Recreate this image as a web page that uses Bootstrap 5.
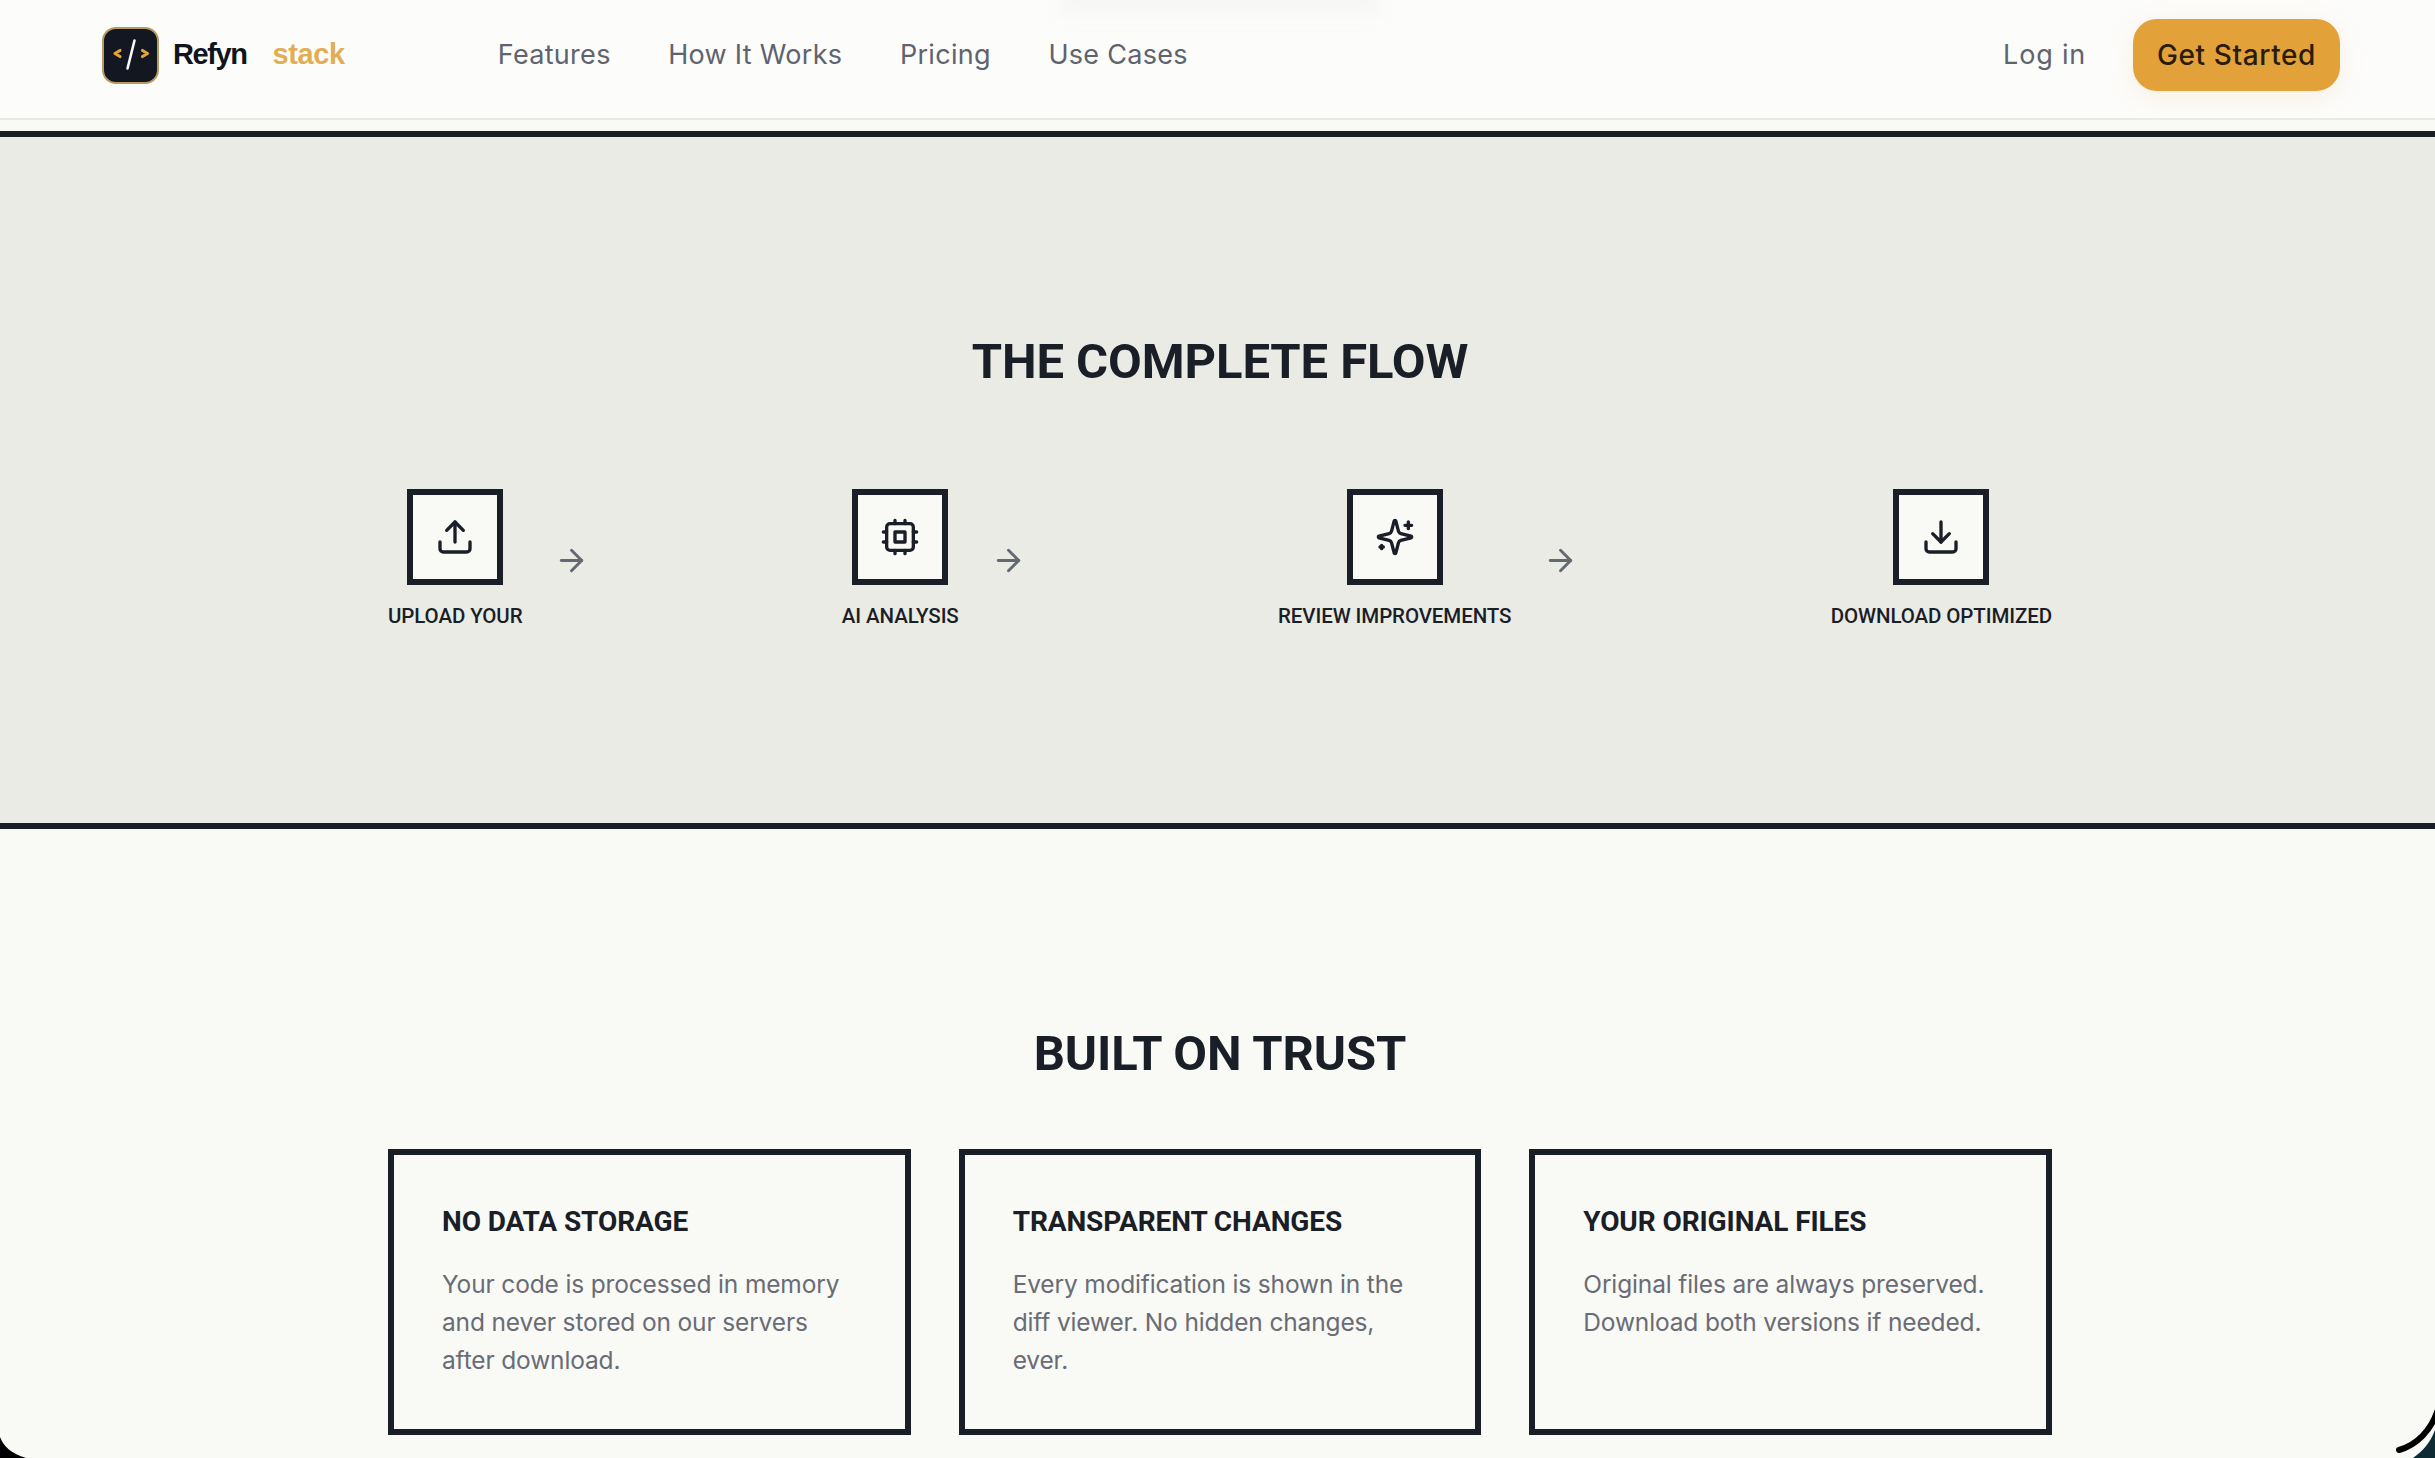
<!DOCTYPE html>
<html lang="en">

<head>
    <meta charset="UTF-8" />
    <meta name="viewport" content="width=device-width, initial-scale=1.0">
    <title>Refyn stack</title>
    <link href="https://cdn.jsdelivr.net/npm/bootstrap@5.3.0/dist/css/bootstrap.min.css" rel="stylesheet">
    <style>
        html, body { height: 100%; overflow: hidden; }
        body { background: #f9f9f6; color: #1a1e26; font-family: "Inter", "Liberation Sans", sans-serif; }
        .top-nav { height: 120px; padding: 0 95px 8px 102px; background: #fcfcfb; border-bottom: 2px solid #e9e9e6; position: relative; overflow: hidden; }
        .top-glow { position: absolute; top: -16px; left: 1060px; width: 320px; height: 30px; background: #f6f6f5; filter: blur(8px); }
        .logo-box { width: 57px; height: 57px; border-radius: 14px; background: #121722; border: 2px solid #b79a5e; position: relative; }
        .brand-a, .brand-b { font-family: "Liberation Sans", sans-serif; font-weight: 700; font-size: 29px; position: relative; }
        .brand-a { color: #10141c; margin-left: 14px; letter-spacing: -1.4px; }
        .brand-b { color: #e2ae55; margin-left: 26px; letter-spacing: -.4px; }
        .nav-links { margin-left: 153px; gap: 57.5px; position: relative; }
        .nav-links a, .login-link { color: #5f636d; font-size: 27px; font-weight: 400; text-decoration: none; letter-spacing: .3px; }
        .login-link { margin-right: 47px; letter-spacing: .8px; position: relative; }
        .start-btn { width: 207px; height: 72px; border: 0; border-radius: 24px; background: #e3a13a; color: #2a1c08; font-size: 28px; font-weight: 500; letter-spacing: .6px; padding: 0; box-shadow: 0 6px 24px rgba(227, 161, 58, .14); position: relative; }
        .flow-band { margin-top: 11px; height: 698px; background: #ebebe6; border-top: 6px solid #1a1e26; border-bottom: 6px solid #1a1e26; padding-top: 200px; }
        .wrap-main { width: 1664px; margin-left: 388px; }
        .sec-title { font-family: "Roboto", sans-serif; font-size: 49px; font-weight: 700; line-height: 1; text-align: center; letter-spacing: -.1px; margin: 0; }
        .flow-row { margin-top: 103px; }
        .flow-step { width: 96px; height: 96px; border: 6px solid #1a1e26; background: #f9f9f6; }
        .flow-step svg { width: 40px; height: 40px; fill: none; stroke: currentColor; stroke-width: 2; stroke-linecap: round; stroke-linejoin: round; }
        .arrow-next { width: 35px; height: 35px; margin-left: 32px; fill: none; stroke: #646871; stroke-width: 2; stroke-linecap: round; stroke-linejoin: round; }
        .flow-label { font-family: "Roboto", sans-serif; font-size: 20.5px; font-weight: 500; line-height: 28px; margin: 17px 0 2px; white-space: nowrap; letter-spacing: -.1px; }
        .trust-sec { padding-top: 200px; }
        .trust-grid { display: grid; grid-template-columns: repeat(3, 1fr); gap: 48px; margin-top: 71px; }
        .trust-box { height: 286px; border: 6px solid #1a1e26; padding: 50px 48px 48px; }
        .trust-box h3 { font-family: "Roboto", sans-serif; font-size: 28px; font-weight: 700; line-height: 1.2; margin: 0 0 26px; letter-spacing: -.1px; }
        .trust-box p { font-size: 24.5px; line-height: 38px; color: #696c75; margin: 0; letter-spacing: -.15px; }
        .corner-l, .corner-r { position: fixed; bottom: 0; width: 60px; height: 60px; pointer-events: none; }
        .corner-l { left: 0; }
        .corner-r { right: 0; }
    </style>
</head>

<body>
    <nav class="top-nav d-flex align-items-center">
        <div class="top-glow"></div>
        <div class="logo-box d-flex align-items-center justify-content-center">
            <svg width="44" height="36" viewBox="0 0 44 36" fill="none" stroke-linecap="round" stroke-linejoin="round">
                <path d="M11 13.5l-5 3 5 3M33.5 13.5l5 3-5 3" stroke="#e3a13a" stroke-width="3.2" />
                <path d="M25.5 3.5l-7 28" stroke="#f9f9f6" stroke-width="2.6" />
            </svg>
        </div>
        <span class="brand-a">Refyn</span>
        <span class="brand-b">stack</span>
        <div class="nav-links d-flex">
            <a href="#">Features</a>
            <a href="#">How It Works</a>
            <a href="#">Pricing</a>
            <a href="#">Use Cases</a>
        </div>
        <a href="#" class="login-link ms-auto">Log in</a>
        <button type="button" class="start-btn">Get Started</button>
    </nav>

    <section class="flow-band">
        <div class="wrap-main">
            <h2 class="sec-title">THE COMPLETE FLOW</h2>
            <div class="flow-row d-flex justify-content-between align-items-center">
                <div class="d-flex align-items-center">
                    <div class="d-flex flex-column align-items-center">
                        <div class="flow-step d-flex align-items-center justify-content-center">
                            <svg viewBox="0 0 24 24"><path d="M21 15v4a2 2 0 0 1-2 2H5a2 2 0 0 1-2-2v-4" /><path d="M17 8l-5-5-5 5" /><path d="M12 3v12" /></svg>
                        </div>
                        <div class="flow-label">UPLOAD YOUR</div>
                    </div>
                    <svg class="arrow-next" viewBox="0 0 24 24"><path d="M5 12h14" /><path d="M12 5l7 7-7 7" /></svg>
                </div>
                <div class="d-flex align-items-center">
                    <div class="d-flex flex-column align-items-center">
                        <div class="flow-step d-flex align-items-center justify-content-center">
                            <svg viewBox="0 0 24 24"><rect x="4" y="4" width="16" height="16" rx="2" /><rect x="9" y="9" width="6" height="6" /><path d="M15 2v2M15 20v2M2 15h2M2 9h2M20 15h2M20 9h2M9 2v2M9 20v2" /></svg>
                        </div>
                        <div class="flow-label">AI ANALYSIS</div>
                    </div>
                    <svg class="arrow-next" viewBox="0 0 24 24"><path d="M5 12h14" /><path d="M12 5l7 7-7 7" /></svg>
                </div>
                <div class="d-flex align-items-center">
                    <div class="d-flex flex-column align-items-center">
                        <div class="flow-step d-flex align-items-center justify-content-center">
                            <svg viewBox="0 0 24 24"><path d="M9.937 15.5A2 2 0 0 0 8.5 14.063l-6.135-1.582a.5.5 0 0 1 0-.962L8.5 9.936A2 2 0 0 0 9.937 8.5l1.582-6.135a.5.5 0 0 1 .963 0L14.063 8.5A2 2 0 0 0 15.5 9.937l6.135 1.581a.5.5 0 0 1 0 .964L15.5 14.063a2 2 0 0 0-1.437 1.437l-1.582 6.135a.5.5 0 0 1-.963 0z" /><path d="M20 3v4M22 5h-4M4 17v2M5 18H3" /></svg>
                        </div>
                        <div class="flow-label">REVIEW IMPROVEMENTS</div>
                    </div>
                    <svg class="arrow-next" viewBox="0 0 24 24"><path d="M5 12h14" /><path d="M12 5l7 7-7 7" /></svg>
                </div>
                <div class="d-flex flex-column align-items-center">
                    <div class="flow-step d-flex align-items-center justify-content-center">
                        <svg viewBox="0 0 24 24"><path d="M21 15v4a2 2 0 0 1-2 2H5a2 2 0 0 1-2-2v-4" /><path d="M7 10l5 5 5-5" /><path d="M12 15V3" /></svg>
                    </div>
                    <div class="flow-label">DOWNLOAD OPTIMIZED</div>
                </div>
            </div>
        </div>
    </section>

    <section class="trust-sec">
        <div class="wrap-main">
            <h2 class="sec-title">BUILT ON TRUST</h2>
            <div class="trust-grid">
                <div class="trust-box">
                    <h3>NO DATA STORAGE</h3>
                    <p>Your code is processed in memory and never stored on our servers after download.</p>
                </div>
                <div class="trust-box">
                    <h3>TRANSPARENT CHANGES</h3>
                    <p>Every modification is shown in the diff viewer. No hidden changes, ever.</p>
                </div>
                <div class="trust-box">
                    <h3>YOUR ORIGINAL FILES</h3>
                    <p>Original files are always preserved. Download both versions if needed.</p>
                </div>
            </div>
        </div>
    </section>

    <svg class="corner-l" viewBox="0 0 60 60"><path d="M0 39C3 48 12 56 26 60H0z" fill="#000" /></svg>
    <svg class="corner-r" viewBox="0 0 60 60">
        <path d="M60 32C55 45 48 53 38 60H60z" fill="#0c2b33" />
        <path d="M62 14C56 32 42 47 24 52" fill="none" stroke="#000" stroke-width="6" stroke-linecap="round" />
    </svg>
</body>

</html>
